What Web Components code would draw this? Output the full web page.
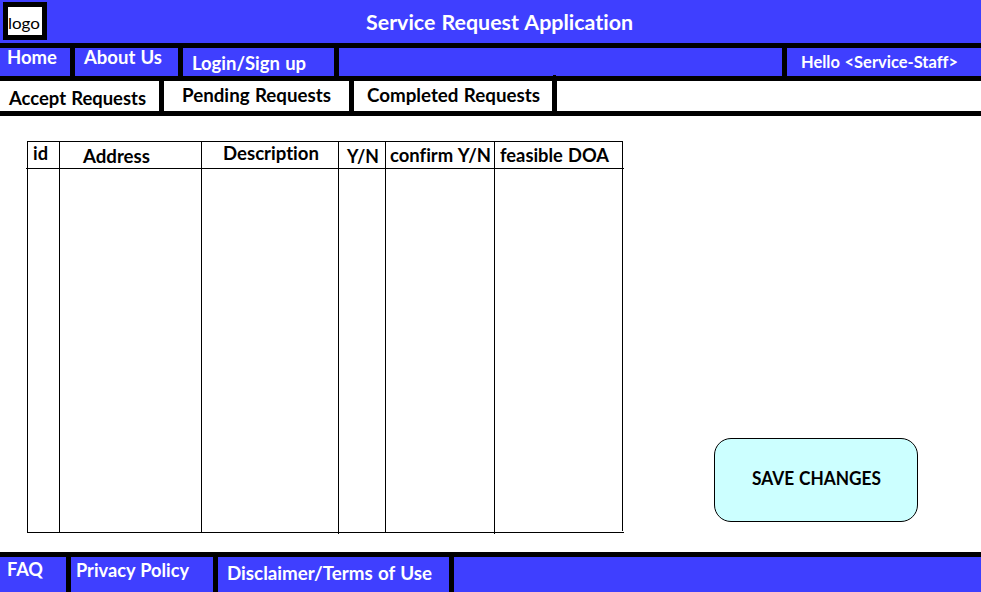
<!DOCTYPE html>
<html lang="en">
<head>
<meta charset="utf-8">
<title>Service Request Application</title>
<style>
html,body{margin:0;height:100%;overflow:hidden;background:#fff}
body{font-family:Lato,Carlito,"Open Sans",sans-serif;font-weight:700;font-variant-ligatures:none}
</style>
</head>
<body>
<service-app></service-app>
<script>
/* A one-line label whose glyph run is condensed or widened to the given width. */
class FitLabel extends HTMLElement {
  connectedCallback() {
    const a = n => this.getAttribute(n);
    const root = this.attachShadow({mode: 'open'});
    root.innerHTML = `<style>
      :host{display:block;width:${a('w')}px;height:18px;line-height:18px;
        margin:${a('top') || 0}px 0 0 ${a('left') || 0}px;
        font-size:${a('size') || 18.4}px;word-spacing:.04em;white-space:nowrap;flex:none}
      span{display:inline-block;transform-origin:0 50%}
    </style><span><slot></slot></span>`;
    const s = root.querySelector('span');
    s.style.transform = `scaleX(${a('w') / s.getBoundingClientRect().width})`;
  }
}

/* A row of cells separated by thick black rules. */
class BarRow extends HTMLElement {
  connectedCallback() {
    this.attachShadow({mode: 'open'}).innerHTML = `<style>
      :host{display:grid;grid-template-columns:${this.getAttribute('cols')};column-gap:5px;
        background:#000;height:${this.getAttribute('h')}px;border-bottom:5px solid #000}
      :host([last]){border-bottom:0}
      ::slotted(*){background:var(--bar)}
    </style><slot></slot>`;
  }
}

class AppLogo extends HTMLElement {
  connectedCallback() {
    this.attachShadow({mode: 'open'}).innerHTML = `<style>
      :host{display:block;box-sizing:border-box;width:44px;height:38px;margin:2px 0 0 3px;
        border:5px solid #000;background:#fff;color:#000;font-weight:400}
    </style><slot></slot>`;
  }
}

class RequestTable extends HTMLElement {
  connectedCallback() {
    const cols = [
      ['id', 31, 5, 2, 15], ['Address', 141, 23, 5, 67], ['Description', 136, 21, 2, 96],
      ['Y/N', 46, 8, 5, 32], ['confirm Y/N', 108, 4, 4, 101], ['feasible DOA', 127, 5, 4, 109]
    ];
    this.attachShadow({mode: 'open'}).innerHTML = `<style>
      :host{display:block;width:597px;height:392px;margin:25px 0 0 27px;position:relative;color:#000}
      .grid{display:grid;grid-template-columns:${cols.map(c => c[1] + 'px').join(' ')};
        grid-template-rows:26px 363px;gap:1px;width:594px;background:#000;border:1px solid #000}
      .grid div{background:#fff;display:flow-root}
      i{position:absolute;background:#000;width:1px;height:1px}
      .l{left:-1px;top:27px}.r{left:596px;top:27px}
      .a{left:311px;top:392px}.b{left:467px;top:392px}
      .gap{left:595px;top:390px;background:#fff}
      .foot{left:596px;top:391px}
    </style>
    <div class="grid">
      ${cols.map(c => `<div><fit-label left="${c[2]}" top="${c[3]}" w="${c[4]}">${c[0]}</fit-label></div>`).join('')}
      ${cols.map(() => '<div></div>').join('')}
    </div>
    <i class="l"></i><i class="r"></i><i class="a"></i><i class="b"></i><i class="gap"></i><i class="foot"></i>`;
  }
}

class SaveButton extends HTMLElement {
  connectedCallback() {
    this.attachShadow({mode: 'open'}).innerHTML = `<style>
      :host{display:block}
      button{all:unset;box-sizing:border-box;display:block;width:204px;height:84px;
        border:1px solid #000;border-radius:17px;background:#cff;color:#000;padding-bottom:4px}
    </style><button><slot></slot></button>`;
  }
}

class ServiceApp extends HTMLElement {
  connectedCallback() {
    this.attachShadow({mode: 'open'}).innerHTML = `<style>
      :host{display:flex;flex-direction:column;width:981px;height:592px;--bar:#3f3fff;color:#fff}
      header{height:43px;background:var(--bar);display:flex;border-bottom:5px solid #000;flex:none}
      bar-row{flex:none}
      bar-row > div{display:flow-root}
      .tabs{--bar:#fff;color:#000;position:relative}
      .tabs i{position:absolute;left:553px;top:-6px;width:3px;height:1px;background:#000}
      main{display:flex;align-items:flex-start;height:436px;flex:none}
      save-button{margin:322px 0 0 90px}
      footer{border-top:5px solid #000;flex:none}
    </style>
    <header>
      <app-logo><fit-label left="0" top="7" w="32" size="16.2">logo</fit-label></app-logo>
      <fit-label left="319" top="13" w="267" size="20.7">Service Request Application</fit-label>
    </header>
    <bar-row h="28" cols="70px 103px 151px 443px 194px">
      <div><fit-label left="7" top="0" w="50">Home</fit-label></div>
      <div><fit-label left="9" top="0" w="78">About Us</fit-label></div>
      <div><fit-label left="9" top="6" w="114">Login/Sign up</fit-label></div>
      <div></div>
      <div><fit-label left="14" top="5" w="157" size="16.1">Hello &lt;Service-Staff&gt;</fit-label></div>
    </bar-row>
    <bar-row class="tabs" h="30" cols="159px 185px 198px 424px">
      <div><fit-label left="9" top="8" w="137">Accept Requests</fit-label></div>
      <div><fit-label left="18" top="5" w="149">Pending Requests</fit-label></div>
      <div><fit-label left="13" top="5" w="173">Completed Requests</fit-label></div>
      <div><i></i></div>
    </bar-row>
    <main>
      <request-table></request-table>
      <save-button><fit-label left="37" w="129">SAVE CHANGES</fit-label></save-button>
    </main>
    <footer>
      <bar-row last h="35" cols="66px 142px 231px 527px">
        <div><fit-label left="7" top="3" w="36">FAQ</fit-label></div>
        <div><fit-label left="5" top="4" w="113">Privacy Policy</fit-label></div>
        <div><fit-label left="9" top="7" w="205">Disclaimer/Terms of Use</fit-label></div>
        <div></div>
      </bar-row>
    </footer>`;
  }
}
customElements.define('fit-label', FitLabel);
customElements.define('bar-row', BarRow);
customElements.define('app-logo', AppLogo);
customElements.define('request-table', RequestTable);
customElements.define('save-button', SaveButton);
customElements.define('service-app', ServiceApp);
</script>
</body>
</html>
